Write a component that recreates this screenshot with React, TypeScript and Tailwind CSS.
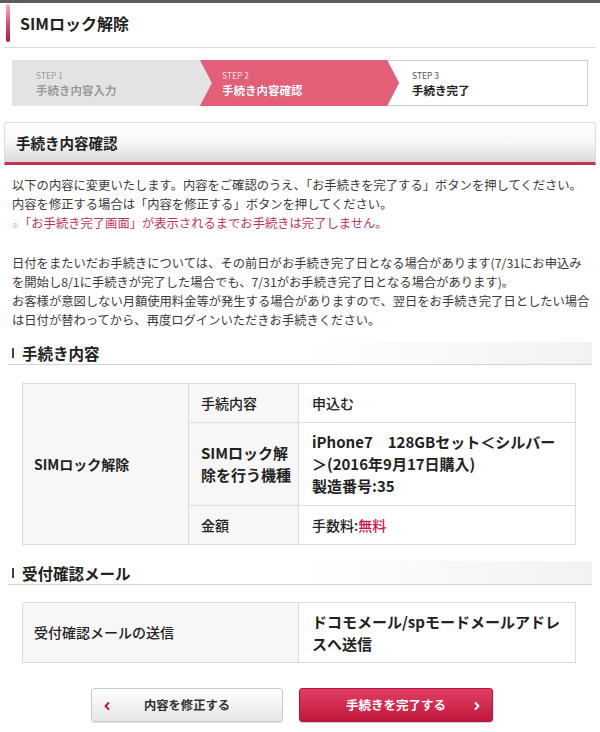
import { ChevronLeft, ChevronRight } from "lucide-react";

export default function App() {
  return (
    <div className="w-[600px] min-h-[732px] bg-white text-[#333] [font-family:'Noto_Sans_CJK_JP','Noto_Sans',sans-serif]">
      <div className="h-[3px] bg-[#5c5c5c]" />
      {/* page title */}
      <div className="mx-[4px] h-[45px] flex items-start border-b border-[#d3dddd]">
        <div className="ml-[2px] mt-[1px] w-[4px] h-[38px] rounded-[2px] bg-gradient-to-b from-[#f3b6c4] via-[#d8506e] to-[#a8183a]" />
        <div className="ml-[10px] mt-[8px] leading-[24px] text-[16px] font-bold text-[#222]">
          SIMロック解除
        </div>
      </div>

      {/* steps */}
      <div className="mt-[12px] mx-[12px] h-[46px] flex">
        <div className="relative z-30 w-[200px] mr-[-12px] [filter:drop-shadow(0_0_0.6px_rgba(0,0,0,0.45))]">
          <div className="h-full bg-[#e3e3e3] [clip-path:polygon(0_0,calc(100%_-_12px)_0,100%_50%,calc(100%_-_12px)_100%,0_100%)] pl-[24px] flex flex-col justify-center gap-[2px]">
            <div className="text-[8.5px] leading-[11px] text-[#9a9a9a]">STEP 1</div>
            <div className="text-[11.5px] leading-[14px] font-bold text-[#999]">手続き内容入力</div>
          </div>
        </div>
        <div className="relative z-20 w-[199px] mr-[-12px] [filter:drop-shadow(0_0_0.6px_rgba(200,60,90,0.5))]">
          <div className="h-full bg-[#e35f78] [clip-path:polygon(0_0,calc(100%_-_12px)_0,100%_50%,calc(100%_-_12px)_100%,0_100%)] pl-[22px] flex flex-col justify-center gap-[2px]">
            <div className="text-[8.5px] leading-[11px] text-[#fbe3e8]">STEP 2</div>
            <div className="text-[11.5px] leading-[14px] font-bold text-white">手続き内容確認</div>
          </div>
        </div>
        <div className="relative z-10 flex-1 border border-[#cfcfcf] bg-white pl-[24px] flex flex-col justify-center gap-[2px]">
          <div className="text-[8.5px] leading-[11px] text-[#555]">STEP 3</div>
          <div className="text-[11.5px] leading-[14px] font-bold text-[#222]">手続き完了</div>
        </div>
      </div>

      {/* section header */}
      <div className="mt-[16px] mx-[4px] h-[43px] rounded-t-[3px] border border-[#dcdcdc] border-b-[3px] border-b-[#c03753] bg-gradient-to-b from-white via-[#f7f7f7] to-[#d9d9d9] flex items-center pl-[11px]">
        <div className="text-[14.5px] font-bold text-[#222]">手続き内容確認</div>
      </div>

      {/* explanation */}
      <div className="mt-[11px] px-[12px] text-[12.3px] leading-[19px] text-[#3a3a3a] whitespace-nowrap">
        <div>以下の内容に変更いたします。内容をご確認のうえ、「お手続きを完了する」ボタンを押してください。</div>
        <div>内容を修正する場合は「内容を修正する」ボタンを押してください。</div>
        <div className="text-[#c2335c]">
          <span className="text-[7px] text-[#d88]">※</span>「お手続き完了画面」が表示されるまでお手続きは完了しません。
        </div>
        <div className="h-[19px]" />
        <div>日付をまたいだお手続きについては、その前日がお手続き完了日となる場合があります(7/31にお申込み</div>
        <div>を開始し8/1に手続きが完了した場合でも、7/31がお手続き完了日となる場合があります)。</div>
        <div>お客様が意図しない月額使用料金等が発生する場合がありますので、翌日をお手続き完了日としたい場合</div>
        <div>は日付が替わってから、再度ログインいただきお手続きください。</div>
      </div>

      {/* sub header 1 */}
      <div className="mt-[12px] mx-[8px] h-[23px] flex items-center border-b border-[#d4d4d4] bg-gradient-to-r from-white via-white to-[#f2f2f2]">
        <div className="ml-[4px] w-[2px] h-[10px] bg-[#444]" />
        <div className="ml-[8px] text-[15.5px] font-bold text-[#222] leading-[22px]">手続き内容</div>
      </div>

      {/* table 1 */}
      <table className="mt-[18px] ml-[22px] w-[554px] border-collapse text-[#222]">
        <tbody>
          <tr className="h-[39px]">
            <td rowSpan={3} className="w-[166px] border border-[#dcdcdc] bg-[#f7f7f7] pl-[11px] text-[14px] font-bold align-middle">
              SIMロック解除
            </td>
            <td className="w-[110px] border border-[#dcdcdc] bg-[#f7f7f7] pl-[12px] text-[14px] font-medium">手続内容</td>
            <td className="border border-[#dcdcdc] bg-white pl-[13px] text-[14px] font-medium">申込む</td>
          </tr>
          <tr className="h-[83px]">
            <td className="border border-[#dcdcdc] bg-[#f7f7f7] pl-[12px] text-[15px] font-bold leading-[22px]">
              SIMロック解
              <br />
              除を行う機種
            </td>
            <td className="border border-[#dcdcdc] bg-white pl-[13px] text-[15px] font-bold leading-[22px] whitespace-nowrap">
              iPhone7　128GBセット＜シルバー
              <br />
              ＞(2016年9月17日購入)
              <br />
              製造番号:35
            </td>
          </tr>
          <tr className="h-[39px]">
            <td className="border border-[#dcdcdc] bg-[#f7f7f7] pl-[12px] text-[14px] font-medium">金額</td>
            <td className="border border-[#dcdcdc] bg-white pl-[13px] text-[14px] font-medium">
              手数料:<span className="text-[#c8184a]">無料</span>
            </td>
          </tr>
        </tbody>
      </table>

      {/* sub header 2 */}
      <div className="mt-[16px] mx-[8px] h-[24px] flex items-center border-b border-[#d4d4d4] bg-gradient-to-r from-white via-white to-[#f2f2f2]">
        <div className="ml-[4px] w-[2px] h-[10px] bg-[#444]" />
        <div className="ml-[8px] text-[15.5px] font-bold text-[#222] leading-[22px]">受付確認メール</div>
      </div>

      {/* table 2 */}
      <table className="mt-[17px] ml-[22px] w-[554px] border-collapse text-[#222]">
        <tbody>
          <tr className="h-[60px]">
            <td className="w-[276px] border border-[#dcdcdc] bg-[#f7f7f7] pl-[11px] text-[14px] font-medium">
              受付確認メールの送信
            </td>
            <td className="border border-[#dcdcdc] bg-white pl-[13px] text-[15px] font-bold leading-[22px] whitespace-nowrap">
              ドコモメール/spモードメールアドレ
              <br />
              スへ送信
            </td>
          </tr>
        </tbody>
      </table>

      {/* buttons */}
      <div className="mt-[25px] pl-[91px] flex gap-[16px]">
        <button className="relative w-[192px] h-[34px] rounded-[3px] border border-[#c9c9c9] bg-gradient-to-b from-white to-[#e6e6e6] shadow-[0_1px_1px_rgba(0,0,0,0.1)] flex items-center justify-center">
          <ChevronLeft className="absolute left-[9px] top-[11px] text-[#c0184a]" size={12} strokeWidth={4} />
          <span className="text-[12.3px] font-bold text-[#333]">内容を修正する</span>
        </button>
        <button className="relative w-[194px] h-[34px] rounded-[3px] border border-[#b3163c] bg-gradient-to-b from-[#e23c62] to-[#c0163d] shadow-[0_1px_1px_rgba(0,0,0,0.2)] flex items-center justify-center">
          <span className="text-[12.5px] font-bold text-white">手続きを完了する</span>
          <ChevronRight className="absolute right-[9px] top-[11px] text-white" size={12} strokeWidth={4} />
        </button>
      </div>
    </div>
  );
}
